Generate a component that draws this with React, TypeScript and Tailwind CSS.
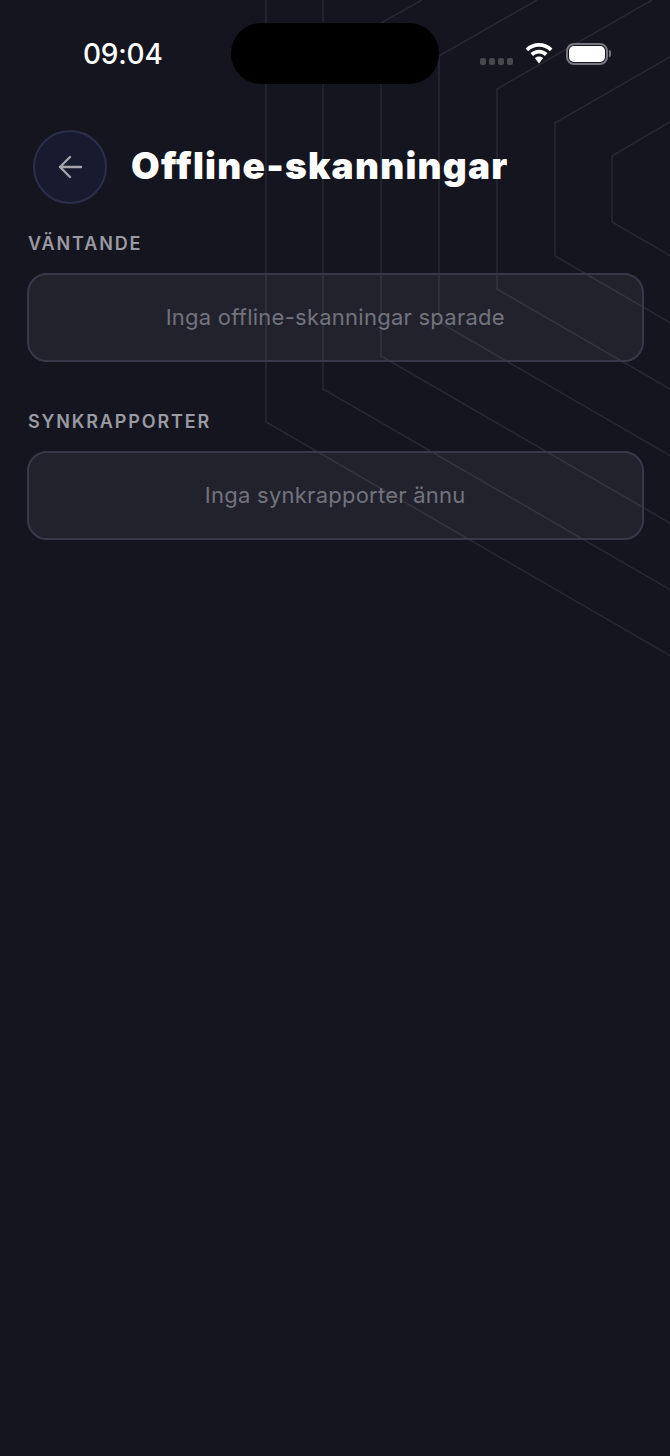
import React from "react";

const paths = [
  "M266 0V422L670 655.5",
  "M323 0V389L670 589.5",
  "M422 0L381 23V356L670 523",
  "M537 0L439 56V322L670 455.5",
  "M652 0L497 89V289L670 389",
  "M670 57L555 123V256L670 322.5",
  "M670 122L612 156V222L670 255.5",
];

function Card({ text }: { text: string }) {
  return (
    <div className="flex h-[89px] items-center justify-center rounded-[20px] border-2 border-[#383849] bg-[#ffffff0f] text-[22px] tracking-[0.25px] text-[#73737d]">
      {text}
    </div>
  );
}

function Label({ text }: { text: string }) {
  return <div className="mb-[17px] h-[24px] pl-px text-[18px] font-semibold leading-[24px] tracking-[1.85px] text-[#9a9aa2]">{text}</div>;
}

export default function App() {
  return (
    <div className="relative h-[1456px] w-[670px] overflow-hidden bg-[#151520] font-['Inter',sans-serif]">
      <svg className="absolute left-0 top-0" width="670" height="700" fill="none" stroke="#282835" strokeWidth="1.5">
        {paths.map((d) => (
          <path key={d} d={d} />
        ))}
      </svg>
      <div className="relative">
        <div className="flex h-[130px] items-start pt-[23px]">
          <div className="flex h-[61px] w-[231px] items-center pl-[83px] text-[28px] font-medium leading-none tracking-[-0.2px] text-white">09:04</div>
          <div className="h-[61px] w-[208px] rounded-[30px] bg-black" />
          <div className="flex h-[61px] items-center">
            <div className="ml-[41px] mt-[16px] flex gap-[3px]">
              <span className="h-[7px] w-[6px] rounded-[2px] bg-[#48484f]" />
              <span className="h-[7px] w-[6px] rounded-[2px] bg-[#48484f]" />
              <span className="h-[7px] w-[6px] rounded-[2px] bg-[#48484f]" />
              <span className="h-[7px] w-[6px] rounded-[2px] bg-[#48484f]" />
            </div>
            <svg className="ml-[12px] mb-[1px]" width="28" height="21" viewBox="0 0 28 21" fill="#fff">
              <path d="M14 0C8.9 0 4.2 2 .6 5.4L3.1 8.2C6 5.4 9.8 3.8 14 3.8s8 1.6 10.9 4.4l2.5-2.8C23.8 2 19.1 0 14 0Z" />
              <path d="M14 6.7c-3.2 0-6.2 1.3-8.5 3.4L8 12.9c1.6-1.5 3.7-2.4 6-2.4s4.4.9 6 2.4l2.5-2.8C20.2 8 17.2 6.7 14 6.7Z" />
              <path d="M14 13.4c-1.6 0-3 .6-4.1 1.6L14 20.4l4.1-5.4c-1.1-1-2.5-1.6-4.1-1.6Z" />
            </svg>
            <div className="ml-[13px] flex items-center">
              <div className="flex h-[22px] w-[42px] items-center justify-center rounded-[8px] border-2 border-[#77777f] p-[1px]">
                <div className="h-full w-full rounded-[5px] bg-white" />
              </div>
              <div className="ml-[1px] h-[7px] w-[2px] rounded-r-[2px] bg-[#77777f]" />
            </div>
          </div>
        </div>
        <div className="flex h-[74px] items-center pl-[33px]">
          <button className="flex h-[74px] w-[74px] items-center justify-center rounded-full border-2 border-[#2c2f4c] bg-[#181b30]">
            <svg width="26" height="26" viewBox="0 0 26 26" fill="none" stroke="#a5a5ab" strokeWidth="2.4" strokeLinecap="round" strokeLinejoin="round">
              <path d="M24 13H3M13 3 3 13l10 10" />
            </svg>
          </button>
          <h1 className="mb-[3px] ml-[24px] text-[37px] font-black leading-none tracking-[1.22px] text-white">Offline-skanningar</h1>
        </div>
        <div className="pl-[27px] pr-[26.5px] pt-[28px]">
          <Label text="VÄNTANDE" />
          <Card text="Inga offline-skanningar sparade" />
          <div className="h-[48px]" />
          <Label text="SYNKRAPPORTER" />
          <Card text="Inga synkrapporter ännu" />
        </div>
      </div>
    </div>
  );
}
